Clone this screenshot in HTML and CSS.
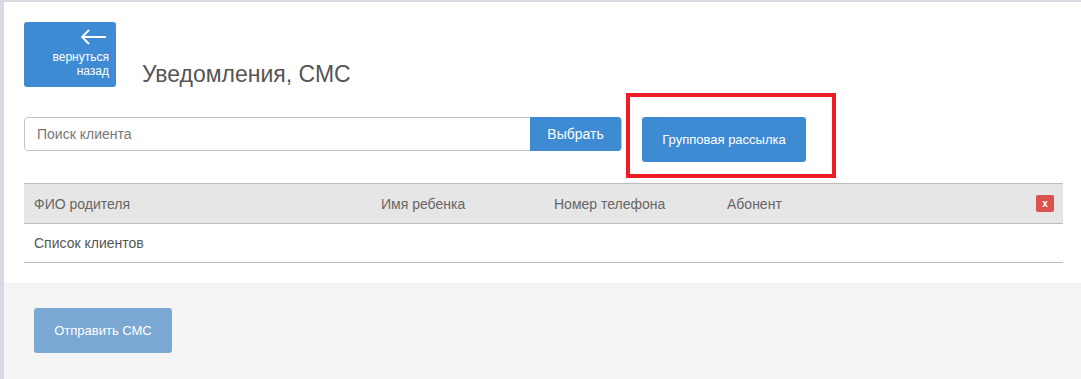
FILE: index.html
```html
<!DOCTYPE html>
<html lang="ru">
<head>
    <meta charset="UTF-8">
    <title>Уведомления, СМС</title>
    <link rel="stylesheet" href="styles.css">
</head>
<body>
    <div class="page">
        <div class="panel">
            <div class="header">
                <a class="back-button" href="#">
                    <svg class="back-arrow" width="27" height="16" viewBox="0 0 27 16">
                        <path d="M26 8H2M9 1L2 8L9 15" fill="none" stroke="#fff" stroke-width="1.8"/>
                    </svg>
                    <span>вернуться<br>назад</span>
                </a>
                <h1 class="title">Уведомления, СМС</h1>
            </div>

            <div class="search-row">
                <div class="search-group">
                    <input type="text" class="search-input" placeholder="Поиск клиента">
                    <button class="btn btn-select">Выбрать</button>
                </div>
                <div class="highlight">
                    <button class="btn btn-group">Групповая рассылка</button>
                </div>
            </div>

            <div class="clients">
                <div class="clients-head">
                    <div class="cell">ФИО родителя</div>
                    <div class="cell">Имя ребенка</div>
                    <div class="cell">Номер телефона</div>
                    <div class="cell">Абонент</div>
                    <div class="cell cell-action"><button class="btn-remove">x</button></div>
                </div>
                <div class="clients-row">Список клиентов</div>
            </div>
        </div>

        <div class="footer">
            <button class="btn btn-send" disabled>Отправить СМС</button>
        </div>
    </div>
</body>
</html>
```

FILE: styles.css
```css
body {
    margin: 0;
    background: #d7dae2;
    font-family: "Liberation Sans", Arial, sans-serif;
    color: #555;
}
.page {
    margin: 2px 0 0 4px;
    min-height: 377px;
    background: #f4f4f4;
}
.panel {
    background: #fff;
    padding: 20px 18px 20px 20px;
}
.header {
    display: flex;
    align-items: flex-end;
}
.back-button {
    display: flex;
    flex-direction: column;
    align-items: flex-end;
    box-sizing: border-box;
    width: 92px;
    height: 65px;
    padding: 7px 7px 0 0;
    background: #3e8bd3;
    border-radius: 3px;
    color: #fff;
    text-decoration: none;
    font-size: 12px;
    line-height: 14px;
    text-align: right;
}
.back-arrow {
    display: block;
    margin: 0 2px 5px 0;
}
.title {
    margin: 0 0 0 26px;
    font-size: 23px;
    font-weight: normal;
    color: #555;
    line-height: 26px;
}
.search-row {
    display: flex;
    align-items: flex-start;
    margin-top: 30px;
}
.search-group {
    display: flex;
    width: 598px;
    height: 34px;
    box-sizing: border-box;
    border: 1px solid #c4c4c4;
    border-radius: 4px;
}
.search-input {
    flex: 1;
    border: none;
    border-radius: 4px 0 0 4px;
    padding: 0 12px;
    font-family: inherit;
    font-size: 14px;
    color: #555;
    outline: none;
}
.search-input::placeholder {
    color: #777;
}
.btn {
    border: none;
    background: #3e8bd3;
    color: #fff;
    font-family: inherit;
    cursor: pointer;
}
.btn-select {
    width: 91px;
    margin: -1px 0;
    font-size: 14px;
    border-radius: 0 3px 3px 0;
}
.highlight {
    margin: -24px 0 0 4px;
    padding: 20px 26px 12px 12px;
    border: 4px solid #ee1c25;
}
.btn-group {
    display: block;
    width: 164px;
    height: 45px;
    font-size: 13px;
    border-radius: 3px;
}
.clients {
    margin-top: 5px;
    border-top: 1px solid #bcbcbc;
}
.clients-head {
    display: grid;
    grid-template-columns: 357px 173px 173px 1fr auto;
    align-items: center;
    height: 39px;
    background: #e6e6e6;
    border-bottom: 1px solid #bcbcbc;
    font-size: 14px;
    color: #666;
}
.cell:first-child {
    padding-left: 10px;
}
.cell-action {
    padding-right: 9px;
}
.btn-remove {
    display: block;
    width: 18px;
    height: 17px;
    padding: 0;
    border: none;
    border-radius: 2px;
    background: #d9534f;
    color: #fff;
    font-family: inherit;
    font-size: 10px;
    font-weight: bold;
    line-height: 15px;
}
.clients-row {
    height: 38px;
    line-height: 38px;
    padding-left: 10px;
    font-size: 14px;
    color: #555;
    border-bottom: 1px solid #bcbcbc;
}
.footer {
    padding: 25px 30px;
}
.btn-send {
    width: 138px;
    height: 45px;
    font-size: 13px;
    border-radius: 3px;
    background: #7ba7d3;
    cursor: default;
}
```
